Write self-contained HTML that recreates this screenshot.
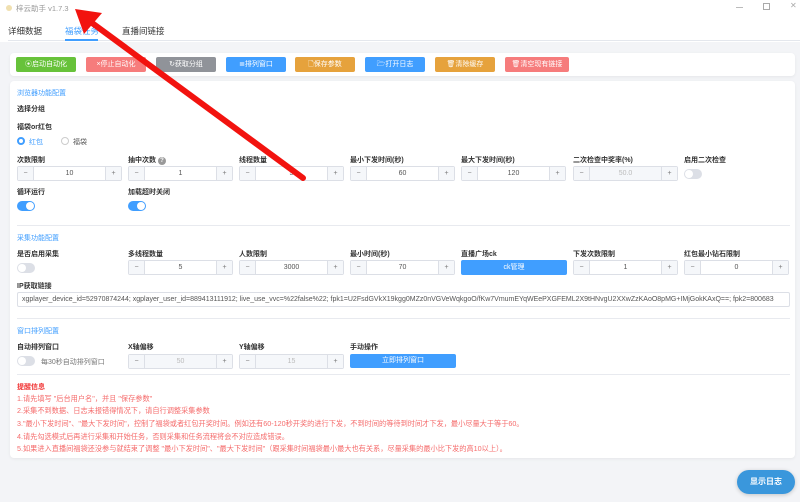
<!DOCTYPE html>
<html><head><meta charset="utf-8"><style>
*{box-sizing:border-box;margin:0;padding:0}
body{width:800px;height:502px;overflow:hidden;background:#f3f4f7;font-family:"Liberation Sans","Noto Sans CJK SC",sans-serif;font-size:7px;color:#333;position:relative}
.a{position:absolute;white-space:nowrap}
.top{position:absolute;left:0;top:0;width:800px;height:42px;background:#fff}
.card{position:absolute;background:#fff;border-radius:4px;box-shadow:0 1px 3px rgba(0,0,0,.06)}
.btn{position:absolute;top:57px;height:15px;width:60px;color:#fff;text-align:center;line-height:15px;border-radius:2px;font-size:7px}
.lab{position:absolute;font-size:7px;color:#333;font-weight:bold}
.sec{position:absolute;font-size:7px;color:#409eff}
.num{position:absolute;width:105px;height:15px;border:1px solid #dcdfe6;border-radius:2px;background:#fff;text-align:center;line-height:13px;color:#555}
.num::before{content:"−";position:absolute;left:0;top:0;width:15px;height:13px;background:#f5f7fa;border-right:1px solid #dcdfe6;color:#777}
.num::after{content:"+";position:absolute;right:0;top:0;width:15px;height:13px;background:#f5f7fa;border-left:1px solid #dcdfe6;color:#777}
.num.dis{background:#f5f7fa;color:#bbb}
.tg{position:absolute;width:18px;height:10px;border-radius:5px;background:#dcdfe6}
.tg::after{content:"";position:absolute;left:1px;top:1px;width:8px;height:8px;border-radius:50%;background:#fff}
.tg.on{background:#409eff}
.tg.on::after{left:9px}
.hr{position:absolute;left:17px;width:773px;height:1px;background:#e8eaef}
.r{position:absolute;left:17px;color:#f56c6c;font-size:7.2px;white-space:nowrap}
</style></head><body>
<div class="top"></div>
<div class="a" style="left:6px;top:5px;width:6px;height:6px;border-radius:50%;background:#f0e0b0"></div>
<div class="a" style="left:16px;top:3px;color:#999;font-size:7.5px">梓云助手 v1.7.3</div>
<div class="a" style="left:736px;top:7px;width:7px;height:1px;background:#bbb"></div>
<div class="a" style="left:763px;top:3px;width:7px;height:7px;border:1px solid #aaa"></div>
<div class="a" style="left:790px;top:1px;color:#aaa;font-size:8px">✕</div>
<div class="a" style="left:8px;top:25px;font-size:8.5px;color:#333">详细数据</div>
<div class="a" style="left:65px;top:25px;font-size:8.5px;color:#409eff">福袋任务</div>
<div class="a" style="left:122px;top:25px;font-size:8.5px;color:#333">直播间链接</div>
<div class="a" style="left:8px;top:40px;width:792px;height:1px;background:#e4e7ed"></div>
<div class="a" style="left:65px;top:39px;width:33px;height:2px;background:#409eff"></div>

<div class="card" style="left:10px;top:53px;width:785px;height:23px"></div>
<div class="btn" style="left:16px;background:#67c23a">⦿启动自动化</div>
<div class="btn" style="left:86px;background:#f67c7c">×停止自动化</div>
<div class="btn" style="left:156px;background:#909399">↻获取分组</div>
<div class="btn" style="left:226px;background:#409eff">≣排列窗口</div>
<div class="btn" style="left:295px;background:#e6a23c">🗋保存参数</div>
<div class="btn" style="left:365px;background:#409eff">🗁打开日志</div>
<div class="btn" style="left:435px;background:#e6a23c">🗑清除缓存</div>
<div class="btn" style="left:505px;width:64px;background:#f67c7c">🗑清空现有链接</div>

<div class="card" style="left:10px;top:81px;width:785px;height:377px"></div>
<div class="sec" style="left:17px;top:88px">浏览器功能配置</div>
<div class="lab" style="left:17px;top:104px">选择分组</div>
<div class="lab" style="left:17px;top:122px">福袋or红包</div>
<div class="a" style="left:17px;top:137px;width:8px;height:8px;border-radius:50%;border:2.5px solid #409eff"></div>
<div class="a" style="left:29px;top:137px;color:#409eff">红包</div>
<div class="a" style="left:61px;top:137px;width:8px;height:8px;border-radius:50%;border:1px solid #ccc"></div>
<div class="a" style="left:73px;top:137px;color:#555">福袋</div>

<div class="lab" style="left:17px;top:155px">次数限制</div>
<div class="lab" style="left:128px;top:155px">抽中次数 <span style="display:inline-block;width:8px;height:8px;border-radius:50%;background:#999;color:#fff;font-size:6px;text-align:center;line-height:8px">?</span></div>
<div class="lab" style="left:239px;top:155px">线程数量</div>
<div class="lab" style="left:350px;top:155px">最小下发时间(秒)</div>
<div class="lab" style="left:461px;top:155px">最大下发时间(秒)</div>
<div class="lab" style="left:573px;top:155px">二次检查中奖率(%)</div>
<div class="lab" style="left:684px;top:155px">启用二次检查</div>
<div class="num" style="left:17px;top:166px">10</div>
<div class="num" style="left:128px;top:166px">1</div>
<div class="num" style="left:239px;top:166px">5</div>
<div class="num" style="left:350px;top:166px">60</div>
<div class="num" style="left:461px;top:166px">120</div>
<div class="num dis" style="left:573px;top:166px">50.0</div>
<div class="tg" style="left:684px;top:169px"></div>

<div class="lab" style="left:17px;top:187px">循环运行</div>
<div class="lab" style="left:128px;top:187px">加载超时关闭</div>
<div class="tg on" style="left:17px;top:201px"></div>
<div class="tg on" style="left:128px;top:201px"></div>

<div class="hr" style="top:225px"></div>
<div class="sec" style="left:17px;top:233px">采集功能配置</div>
<div class="lab" style="left:17px;top:249px">是否启用采集</div>
<div class="lab" style="left:128px;top:249px">多线程数量</div>
<div class="lab" style="left:239px;top:249px">人数限制</div>
<div class="lab" style="left:350px;top:249px">最小时间(秒)</div>
<div class="lab" style="left:461px;top:249px">直播广场ck</div>
<div class="lab" style="left:573px;top:249px">下发次数限制</div>
<div class="lab" style="left:684px;top:249px">红包最小钻石限制</div>
<div class="tg" style="left:17px;top:263px"></div>
<div class="num" style="left:128px;top:260px">5</div>
<div class="num" style="left:239px;top:260px">3000</div>
<div class="num" style="left:350px;top:260px">70</div>
<div class="a" style="left:461px;top:260px;width:106px;height:15px;background:#409eff;color:#fff;text-align:center;line-height:15px;border-radius:2px">ck管理</div>
<div class="num" style="left:573px;top:260px">1</div>
<div class="num" style="left:684px;top:260px">0</div>
<div class="lab" style="left:17px;top:281px">IP获取链接</div>
<div class="a" style="left:17px;top:292px;width:773px;height:15px;border:1px solid #dcdfe6;border-radius:2px;line-height:13px;padding-left:4px;color:#555;overflow:hidden;font-size:7px">xgplayer_device_id=52970874244; xgplayer_user_id=889413111912; live_use_vvc=%22false%22; fpk1=U2FsdGVkX19kgg0MZz0nVGVeWqkgoO/fKw7VmumEYqWEePXGFEML2X9tHNvgU2XXwZzKAoO8pMG+IMjGokKAxQ==; fpk2=800683</div>

<div class="hr" style="top:318px"></div>
<div class="sec" style="left:17px;top:326px">窗口排列配置</div>
<div class="lab" style="left:17px;top:342px">自动排列窗口</div>
<div class="lab" style="left:128px;top:342px">X轴偏移</div>
<div class="lab" style="left:239px;top:342px">Y轴偏移</div>
<div class="lab" style="left:350px;top:342px">手动操作</div>
<div class="tg" style="left:17px;top:356px"></div>
<div class="a" style="left:41px;top:357px;color:#777">每30秒自动排列窗口</div>
<div class="num dis" style="left:128px;top:354px">50</div>
<div class="num dis" style="left:239px;top:354px">15</div>
<div class="a" style="left:350px;top:354px;width:106px;height:14px;background:#409eff;color:#fff;text-align:center;line-height:14px;border-radius:2px">立即排列窗口</div>
<div class="hr" style="top:374px"></div>
<div class="a" style="left:17px;top:382px;color:#f03030;font-weight:bold">提醒信息</div>
<div class="r" style="top:394px">1.请先填写 "后台用户名"，并且 "保存参数"</div>
<div class="r" style="top:406px">2.采集不到数据、日志未报错得情况下，请自行调整采集参数</div>
<div class="r" style="top:419px">3."最小下发时间"、"最大下发时间"，控制了福袋或者红包开奖时间。例如还有60-120秒开奖的进行下发，不到时间的等待到时间才下发，最小尽量大于等于60。</div>
<div class="r" style="top:432px">4.请先勾选模式后再进行采集和开始任务，否则采集和任务流程将会不对应造成错误。</div>
<div class="r" style="top:444px">5.如果进入直播间福袋还没参与就结束了调整 "最小下发时间"、"最大下发时间"（跟采集时间福袋最小最大也有关系，尽量采集的最小比下发的高10以上）。</div>

<div class="a" style="left:737px;top:470px;width:58px;height:24px;border-radius:12px;background:#3a97dc;color:#fff;text-align:center;line-height:24px;font-size:8px;font-weight:bold;box-shadow:0 1px 4px rgba(0,0,0,.2)">显示日志</div>

<svg class="a" style="left:0;top:0" width="800" height="502">
<line x1="303" y1="178" x2="88" y2="20" stroke="#f2130f" stroke-width="6" stroke-linecap="round"/>
<polygon points="75,9 102,13 84,34" fill="#f2130f"/>
</svg>
</body></html>
